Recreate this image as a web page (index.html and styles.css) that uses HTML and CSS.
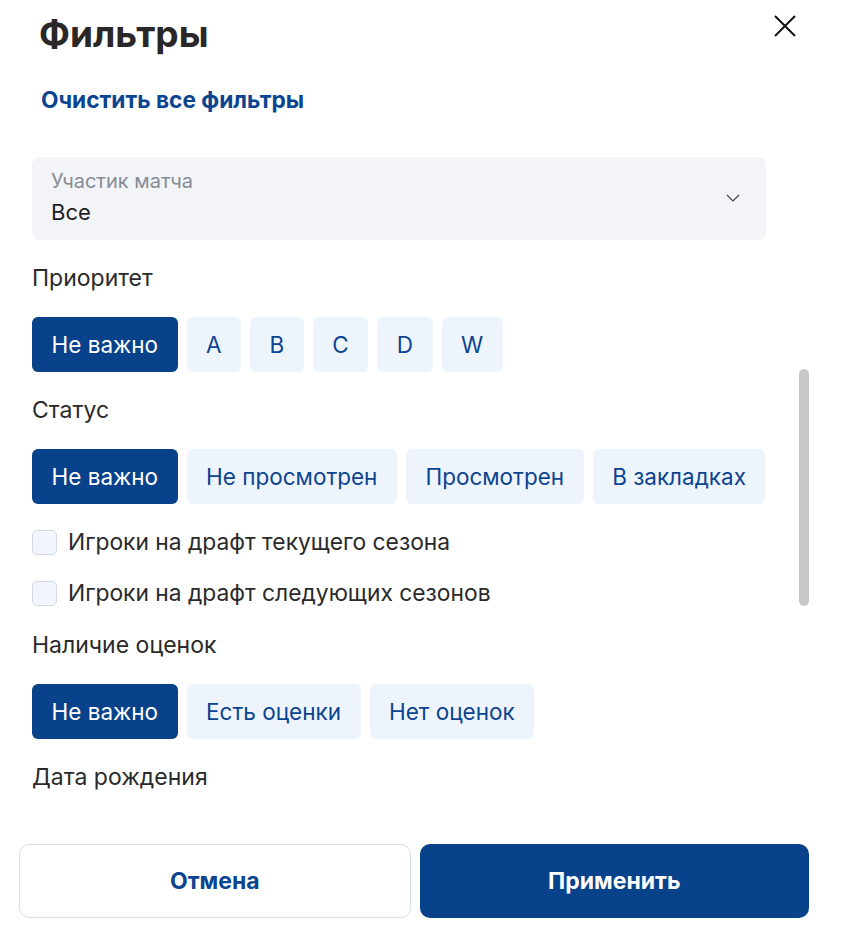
FILE: index.html
```html
<!DOCTYPE html>
<html lang="ru">
<head>
<meta charset="utf-8">
<title>Фильтры</title>
<link rel="stylesheet" href="styles.css">
</head>
<body>
<div class="modal">
  <header class="head">
    <h1 class="title">Фильтры</h1>
    <button class="close" aria-label="Закрыть">
      <svg width="22" height="22" viewBox="0 0 22 22"><path d="M1 1 L21 21 M21 1 L1 21" stroke="#111" stroke-width="2" fill="none"/></svg>
    </button>
  </header>
  <a class="clear" href="#">Очистить все фильтры</a>

  <div class="content">
    <div class="select">
      <div class="select-text">
        <span class="select-label">Участик матча</span>
        <span class="select-value">Все</span>
      </div>
      <svg class="chev" width="14" height="8" viewBox="0 0 14 8"><path d="M1 1 L7 7 L13 1" stroke="#444" stroke-width="1.2" fill="none"/></svg>
    </div>

    <div class="label">Приоритет</div>
    <div class="chips">
      <button class="chip active">Не важно</button>
      <button class="chip">A</button>
      <button class="chip">B</button>
      <button class="chip">C</button>
      <button class="chip">D</button>
      <button class="chip">W</button>
    </div>

    <div class="label">Статус</div>
    <div class="chips">
      <button class="chip active">Не важно</button>
      <button class="chip">Не просмотрен</button>
      <button class="chip">Просмотрен</button>
      <button class="chip">В закладках</button>
    </div>

    <label class="check"><span class="box"></span>Игроки на драфт текущего сезона</label>
    <label class="check"><span class="box"></span>Игроки на драфт следующих сезонов</label>

    <div class="label">Наличие оценок</div>
    <div class="chips">
      <button class="chip active">Не важно</button>
      <button class="chip">Есть оценки</button>
      <button class="chip">Нет оценок</button>
    </div>

    <div class="label">Дата рождения</div>
  </div>

  <footer class="foot">
    <button class="btn cancel">Отмена</button>
    <button class="btn apply">Применить</button>
  </footer>

  <div class="thumb"></div>
</div>
</body>
</html>
```
FILE: styles.css
```css
* { box-sizing: border-box; }
html, body { margin: 0; padding: 0; background: #fff; }
body { font-family: Inter, "Noto Sans", sans-serif; color: #2a2a2a; }

.modal {
  position: relative;
  width: 845px;
  height: 934px;
  display: flex;
  flex-direction: column;
  overflow: hidden;
}

.head {
  display: flex;
  align-items: flex-start;
  justify-content: space-between;
  padding: 12px 49px 0 39px;
  height: 62px;
}
.title {
  margin: 0;
  font-family: Inter, sans-serif;
  font-weight: 700;
  font-size: 37px;
  line-height: 44px;
  color: #2b2727;
}
.close {
  border: 0;
  background: none;
  padding: 0;
  margin-top: 3px;
  width: 22px;
  height: 22px;
  display: block;
  cursor: pointer;
}
.close svg { display: block; }

.clear {
  display: block;
  margin: 26px 0 0 41px;
  font-family: Inter, sans-serif;
  font-weight: 700;
  font-size: 22.7px;
  line-height: 24px;
  color: #0b4490;
  text-decoration: none;
  align-self: flex-start;
}

.content {
  padding: 45px 0 0 32px;
  width: 766px;
  flex: 1;
  overflow: hidden;
}

.select {
  height: 83px;
  background: #f2f4f8;
  border-radius: 8px;
  display: flex;
  align-items: center;
  justify-content: space-between;
  padding: 0 26px 0 19px;
}
.select-text { display: flex; flex-direction: column; }
.select-label {
  font-size: 20px;
  line-height: 20px;
  color: #868b94;
  margin-top: -1px;
}
.select-value {
  font-size: 22px;
  line-height: 26px;
  color: #1e1e1e;
  margin-top: 8px;
}
.chev { margin-top: -2px; }

.label {
  font-size: 23px;
  line-height: 24px;
  color: #2a2a2a;
  margin-top: 26px;
}

.chips {
  display: flex;
  gap: 9px;
  margin-top: 27px;
}
.chip {
  flex: none;
  white-space: nowrap;
  height: 55px;
  border: 0;
  border-radius: 6px;
  padding: 0 19.5px;
  background: #eef4fc;
  color: #0b4490;
  font-family: Inter, sans-serif;
  font-size: 22.5px;
  cursor: pointer;
}
.chip.active {
  background: #08428a;
  color: #fff;
}

.check {
  display: flex;
  align-items: center;
  gap: 11px;
  font-size: 22.8px;
  line-height: 26px;
  color: #2a2a2a;
  margin-top: 25px;
  height: 26px;
  white-space: nowrap;
}
.chips + .check { margin-top: 25px; }
.box {
  width: 25px;
  height: 25px;
  border: 1px solid #d3d9e2;
  border-radius: 5px;
  background: #f1f5fd;
  flex: none;
}
.check + .label { margin-top: 27px; }

.foot {
  display: flex;
  gap: 9px;
  padding: 0 36px 16px 19px;
}
.btn {
  flex: 1;
  height: 74px;
  border-radius: 10px;
  font-family: Inter, sans-serif;
  font-weight: 700;
  font-size: 23px;
  cursor: pointer;
}
.cancel {
  background: #fff;
  border: 1px solid #d6e0ec;
  color: #0b4490;
}
.apply {
  background: #08428a;
  border: 0;
  color: #fff;
}

.thumb {
  position: absolute;
  left: 799px;
  top: 369px;
  width: 10px;
  height: 237px;
  border-radius: 5px;
  background: #c8c8c8;
}
```
